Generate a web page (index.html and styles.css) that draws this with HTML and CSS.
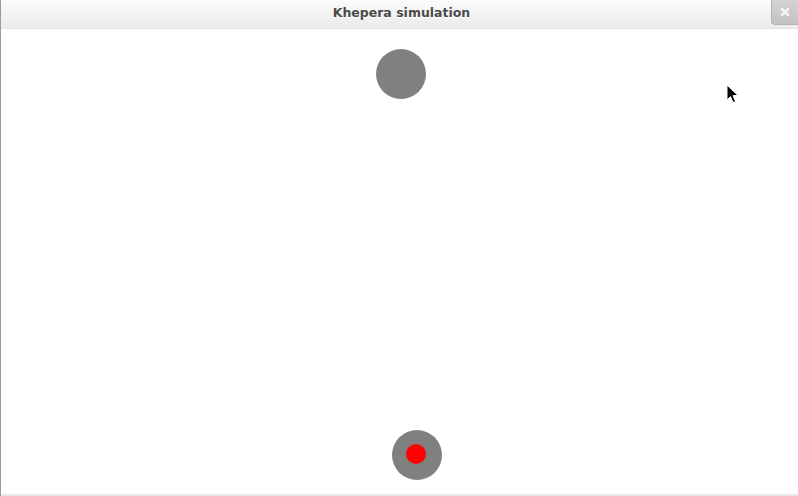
FILE: index.html
```html
<!DOCTYPE html>
<html>
<head>
<meta charset="utf-8">
<link rel="stylesheet" href="styles.css">
</head>
<body>
<div class="window">
  <header class="titlebar">
    <span class="title">Khepera simulation</span>
    <button class="close" aria-label="Close">
      <svg width="10" height="10" viewBox="0 0 10 10"><path d="M2 2 L8 8 M8 2 L2 8" stroke="#f4f4f4" stroke-width="2.6" stroke-linecap="square"/></svg>
    </button>
  </header>
  <main class="canvas">
    <div class="obstacle"></div>
    <div class="robot"><div class="robot-core"></div></div>
    <svg class="cursor" width="14" height="22" viewBox="0 0 14 22"><path d="M1 1 L1 16 L4.5 12.5 L7 18.5 L9.5 17.5 L7 11.5 L12 11.5 Z" fill="#000" stroke="#fff" stroke-width="1"/></svg>
  </main>
</div>
</body>
</html>
```
FILE: styles.css
```css
html, body {
  margin: 0;
  padding: 0;
  width: 798px;
  height: 496px;
  overflow: hidden;
  background: #ffffff;
}
.window {
  display: flex;
  flex-direction: column;
  width: 798px;
  height: 496px;
  box-sizing: border-box;
  border-left: 1px solid #9a9a9a;
}
.titlebar {
  position: relative;
  height: 29px;
  flex: none;
  display: flex;
  align-items: center;
  justify-content: center;
  background: linear-gradient(#fbfbfb, #ebebeb);
  border-bottom: 1px solid #e4e4e4;
  box-sizing: border-box;
}
.title {
  font-family: "DejaVu Sans", sans-serif;
  font-weight: bold;
  font-size: 12.5px;
  color: #4a4a4a;
  text-shadow: 0 1px 0 #ffffff;
  margin-left: 4px;
  margin-top: -3px;
}
.close {
  position: absolute;
  top: 0;
  right: 0;
  width: 27px;
  height: 25px;
  padding: 0;
  border: 1px solid #b4b4b4;
  border-top: none;
  border-right: none;
  border-bottom-left-radius: 4px;
  background: linear-gradient(#d4d4d4, #c2c2c2);
  display: flex;
  align-items: center;
  justify-content: center;
  box-sizing: border-box;
}
.canvas {
  position: relative;
  flex: 1;
  background: #ffffff;
  border-bottom: 2px solid #e8e8e8;
}
.obstacle {
  position: absolute;
  left: 375px;
  top: 20px;
  width: 50px;
  height: 50px;
  border-radius: 50%;
  background: #808080;
}
.robot {
  position: absolute;
  left: 391px;
  top: 401px;
  width: 50px;
  height: 50px;
  border-radius: 50%;
  background: #808080;
  display: flex;
  align-items: center;
  justify-content: center;
}
.robot-core {
  width: 20px;
  height: 20px;
  border-radius: 50%;
  background: #ff0000;
  margin: -2px 2px 0 0;
}
.cursor {
  position: absolute;
  left: 725px;
  top: 55px;
}
```
